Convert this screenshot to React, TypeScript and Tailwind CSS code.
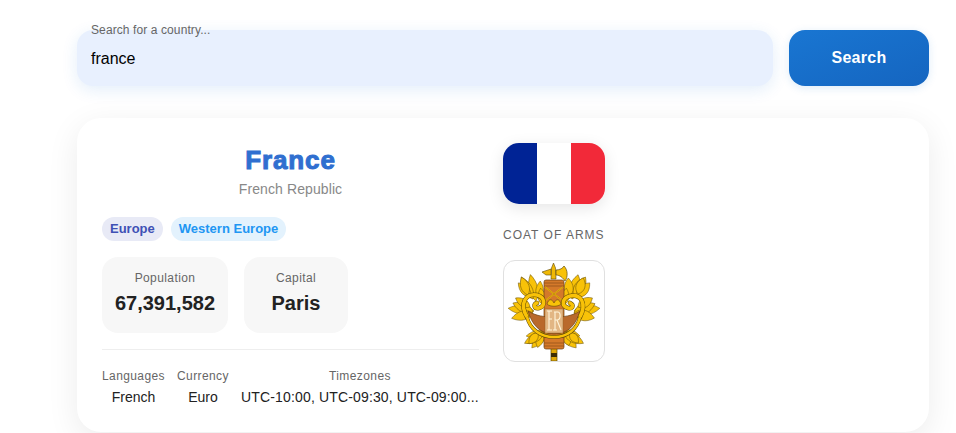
type L = [number, number, number, number, number];

const laurel: L[] = [
  [34, 40, -12, 27, 6], [31, 38, -28, 25, 6], [29, 36, -42, 19, 5.5], [37, 38, 4, 18, 5], [26, 34, -20, 19, 5.5],
  [32, 50, -84, 26, 6], [31, 51, -66, 22, 6], [31, 52, -104, 22, 6], [28, 46, -58, 17, 5],
  [48, 70, -118, 26, 6], [46, 72, -98, 22, 5.5], [44, 70, -140, 22, 6], [40, 70, -165, 17, 5.5], [42, 72, -118, 22, 5.5], [36, 72, -140, 14, 5],
  [41, 44, -8, 17, 5], [45, 44, 10, 15, 4.5],
];

const oak: L[] = [
  [70, 38, 14, 25, 7], [72, 36, 30, 23, 7], [75, 36, 42, 19, 6.5], [67, 36, -2, 19, 6], [76, 33, 18, 17, 6],
  [72, 50, 84, 26, 7], [72, 52, 66, 23, 7], [72, 52, 104, 21, 7], [76, 46, 58, 17, 6],
  [56, 70, 118, 24, 7], [58, 72, 98, 20, 6], [60, 70, 140, 22, 7], [63, 70, 165, 15, 6], [62, 72, 118, 22, 6], [68, 72, 140, 13, 5],
  [62, 44, 8, 17, 5], [58, 44, -10, 15, 4.5],
];

function Leaf({ l }: { l: L }) {
  const [x, y, r, h, w] = l;
  return (
    <path
      transform={`translate(${x} ${y}) rotate(${r})`}
      d={`M0 0 C${w} ${-h * 0.25} ${w} ${-h * 0.65} 0 ${-h} C${-w} ${-h * 0.65} ${-w} ${-h * 0.25} 0 0 Z`}
      fill="#f8c208"
      stroke="#6a5208"
      strokeWidth="0.5"
    />
  );
}

function CoatOfArms() {
  const scroll =
    "M25 56 C17 42 24 32 35 34 C43 36 44 45 37 47 C32 48 31 43 35 42 M78 56 C85 42 79 33 68 35 C60 37 59 45 66 47 C71 48 72 44 68 42";
  return (
    <svg width="100" height="100" viewBox="2 0 100 100">
      {laurel.map((l, i) => <Leaf key={i} l={l} />)}
      {oak.map((l, i) => <Leaf key={i} l={l} />)}

      <path d="M49 84 H55 V100 H49 Z" fill="#e2aa06" stroke="#5f4a08" strokeWidth="0.7" />
      <path d="M49 92 H55 V96 H49 Z" fill="#3d2d05" />
      <path d="M49 18 L49.5 7 L51.5 2 L53.5 7 L54 18 Z" fill="#f0b906" stroke="#5f4a08" strokeWidth="0.6" />
      <path d="M40 11 L49 8 L49 14 L44 14 Z" fill="#f0b906" stroke="#5f4a08" strokeWidth="0.6" />
      <path d="M54 9 C58 9 61 7 62 5 C66 9 66 16 63 20 C61 17 58 14 54 14 Z" fill="#f8c208" stroke="#5f4a08" strokeWidth="0.7" />

      <rect x="42" y="19" width="20" height="69" rx="2" fill="#d4792a" stroke="#6b3f12" strokeWidth="0.7" />
      <path d="M42 22 H62 M42 25 H62 M42 82 H62 M42 85 H62" stroke="#8a4f18" strokeWidth="0.7" />
      <path d="M43 26 L61 40 M61 26 L43 40 M43 74 L61 62 M61 74 L43 62" stroke="#f8c208" strokeWidth="1.5" />
      <path d="M43 26 L61 40 M61 26 L43 40 M43 74 L61 62 M61 74 L43 62" stroke="#7a5008" strokeWidth="0.4" />

      <path d="M26 50 C34 55 42 56 52 56 C62 56 70 55 78 50 C74 64 66 73 52 73 C38 73 30 64 26 50 Z" fill="#b9692c" stroke="#6b3f12" strokeWidth="0.7" />
      <path d={scroll} fill="none" stroke="#5f4a08" strokeWidth="4.6" strokeLinecap="round" />
      <path d={scroll} fill="none" stroke="#f8c208" strokeWidth="3.6" strokeLinecap="round" />
      <path d="M25 56 C28 68 38 76 52 76 C66 76 75 68 78 56" fill="none" stroke="#5f4a08" strokeWidth="3.6" />
      <path d="M25 56 C28 68 38 76 52 76 C66 76 75 68 78 56" fill="none" stroke="#f8c208" strokeWidth="2.7" />
      <path d="M45 43 C47 37 50 38 52 42 C54 38 57 37 59 43 C56 46 48 46 45 43 Z" fill="#f8c208" stroke="#5f4a08" strokeWidth="0.6" />

      <rect x="43" y="48" width="18" height="24" fill="#e2b683" stroke="#8a5a20" strokeWidth="0.4" />
      <path d="M45 50 H50 M47 50 V69 M45 69 H50 M47 58 H50 M52 51 H56 C59 51 59 59 55 59 L59 69 M53 51 V69 M51 69 H55 M53 59 H55" fill="none" stroke="#fff5da" strokeWidth="1.1" />
    </svg>
  );
}

export default function App() {
  return (
    <div className="h-[433px] overflow-hidden bg-white pl-[77px] pr-[27px] pt-[30px] font-['Liberation_Sans',Arial,sans-serif]">
      <div className="flex gap-4">
        <div className="relative flex-1 h-14 rounded-2xl bg-[#e8f0fe] shadow-[0_4px_16px_rgba(25,118,210,0.12)] flex items-center pl-3.5 pt-0.5 text-base text-black">
          <span className="absolute left-3.5 -top-[7px] text-xs leading-[14px] tracking-[0.1px] text-[#666666]">Search for a country...</span>
          france
        </div>
        <button className="w-[140px] h-14 rounded-2xl bg-gradient-to-br from-[#1976d2] to-[#1565c0] text-white font-bold text-base tracking-[0.3px] shadow-[0_2px_8px_rgba(25,118,210,0.15)]">
          Search
        </button>
      </div>

      <div className="mt-8 h-[314px] rounded-3xl bg-white shadow-[0_8px_32px_rgba(0,0,0,0.08)] pl-[25px] pt-[25px] flex gap-6">
        <div className="w-[377px]">
          <h1 className="text-center text-[26px] leading-[34px] font-bold text-[#2f6fd0] [-webkit-text-stroke:1px_#2f6fd0] tracking-[0.9px]">
            France
          </h1>
          <p className="text-center text-sm leading-5 mt-0.5 tracking-[0.1px] text-[#888888]">French Republic</p>

          <div className="flex gap-2 mt-[18px]">
            <span className="h-6 px-2 rounded-full bg-[#e8eaf6] text-[#3f51b5] text-[13px] leading-6 font-bold">Europe</span>
            <span className="h-6 px-2 rounded-full bg-[#e3f2fd] text-[#2196f3] text-[13px] leading-6 font-bold">Western Europe</span>
          </div>

          <div className="flex gap-4 mt-[16px]">
            <div className="w-[126px] h-[76px] rounded-2xl bg-[#f7f7f7] text-center pt-3.5">
              <div className="text-xs leading-[14px] text-[#666666] tracking-[0.4px]">Population</div>
              <div className="text-xl leading-6 mt-1.5 font-bold text-[#222222]">67,391,582</div>
            </div>
            <div className="w-[104px] h-[76px] rounded-2xl bg-[#f7f7f7] text-center pt-3.5">
              <div className="text-xs leading-[14px] text-[#666666] tracking-[0.4px]">Capital</div>
              <div className="text-xl leading-6 mt-1.5 font-bold text-[#222222]">Paris</div>
            </div>
          </div>

          <div className="mt-4 border-t border-[#eeeeee] pt-[19px] flex gap-3">
            <div className="text-center">
              <div className="text-xs leading-[14px] text-[#666666] tracking-[0.4px]">Languages</div>
              <div className="text-sm leading-5 mt-1 text-[#222222]">French</div>
            </div>
            <div className="text-center">
              <div className="text-xs leading-[14px] text-[#666666] tracking-[0.4px]">Currency</div>
              <div className="text-sm leading-5 mt-1 text-[#222222]">Euro</div>
            </div>
            <div className="text-center flex-1">
              <div className="text-xs leading-[14px] text-[#666666] tracking-[0.4px]">Timezones</div>
              <div className="text-sm leading-5 mt-1 text-[#222222] tracking-[0.15px] whitespace-nowrap">UTC-10:00, UTC-09:30, UTC-09:00...</div>
            </div>
          </div>
        </div>

        <div className="w-[102px]">
          <div className="w-[102px] h-[61px] rounded-2xl overflow-hidden flex shadow-[0_4px_16px_rgba(0,0,0,0.1)]">
            <div className="flex-1 bg-[#002395]" />
            <div className="flex-1 bg-white" />
            <div className="flex-1 bg-[#f22939]" />
          </div>
          <div className="mt-6 text-xs leading-[14px] tracking-[1px] text-[#666666] whitespace-nowrap">COAT OF ARMS</div>
          <div className="mt-[18px] w-[102px] h-[102px] rounded-xl border border-[#e0e0e0] bg-white flex items-center justify-center">
            <CoatOfArms />
          </div>
        </div>
      </div>
    </div>
  );
}
